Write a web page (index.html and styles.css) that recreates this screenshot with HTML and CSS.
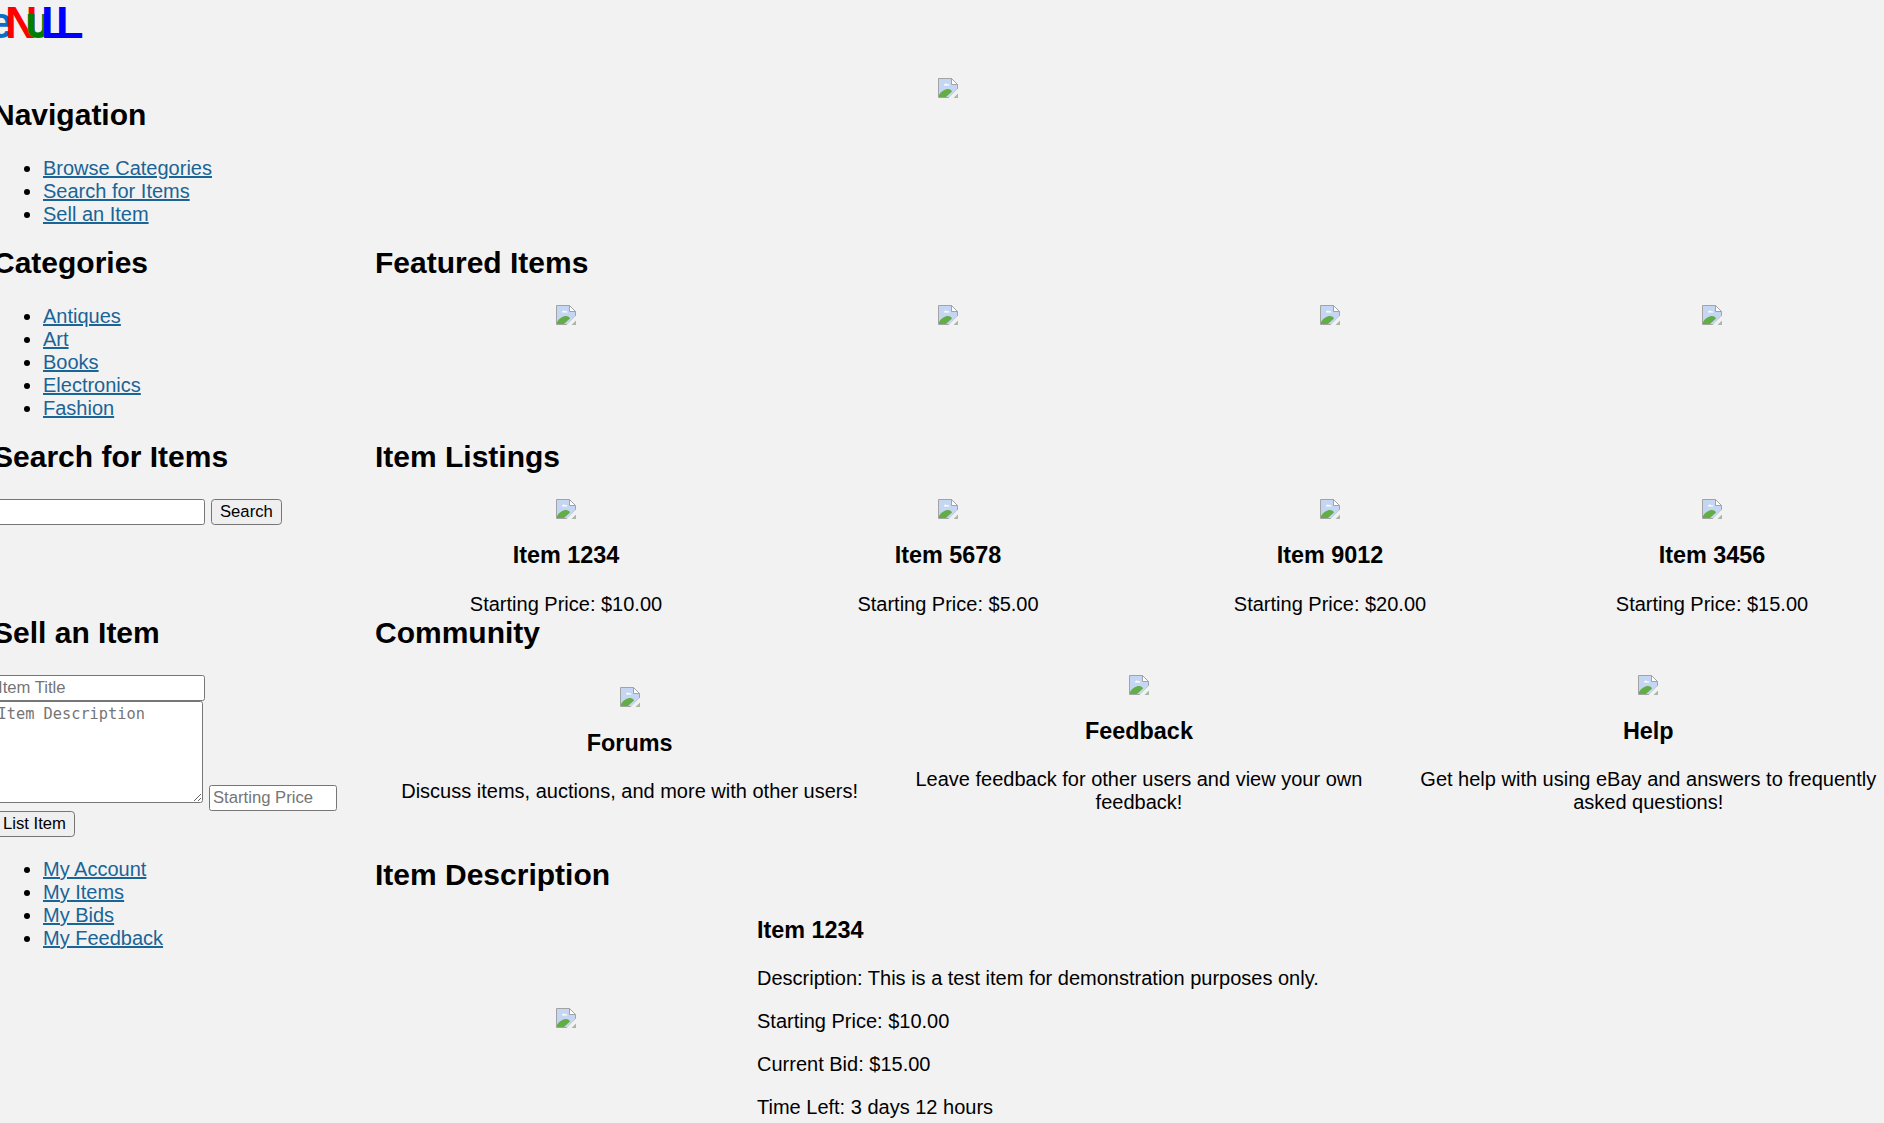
FILE: index.html
```html
<!DOCTYPE html>
<html lang="en">

<head>
    <meta charset="UTF-8">
    <title>eNULL</title>
    <link rel="stylesheet" href="styles.css">
</head>

<body>
    <!-- broken image glyph, reused everywhere -->
    <svg class="defs" width="0" height="0">
        <symbol id="broken" viewBox="0 0 20 20">
            <path d="M.5.5H13.5L19.5 6.5V11L11.500 19.500H.5Z" fill="#c5d6f2" stroke="#a3a3a3"/>
            <path d="M13.500.5V6.500H19.500Z" fill="#fff" stroke="#a3a3a3"/>
            <path d="M6 7.500a1.600 1.600 0 0 1 3-1 1.500 1.500 0 0 1 2.500 1Z" fill="#fff"/>
            <path d="M1 19V17C3 13.500 7 11 10 11C12 11 13.500 12 14 13.500L8 19Z" fill="#62ad45"/>
            <path d="M20 10.500 10.500 20H14L20 14Z" fill="#f2f2f2"/>
            <path d="M20 15.500V20H15.500Z" fill="#a9b8a2"/>
        </symbol>
    </svg>

    <div class="page">
        <div class="logo"><span class="e">e</span><span class="n">N</span><span class="u">U</span><span class="l">L</span><span class="l last">L</span></div>
        <div class="hero"><svg class="pic"><use href="#broken"/></svg></div>

        <div class="side">
            <h2>Navigation</h2>
            <ul>
                <li><a href="#">Browse Categories</a></li>
                <li><a href="#">Search for Items</a></li>
                <li><a href="#">Sell an Item</a></li>
            </ul>
        </div>
        <div></div>

        <div class="side">
            <h2>Categories</h2>
            <ul>
                <li><a href="#">Antiques</a></li>
                <li><a href="#">Art</a></li>
                <li><a href="#">Books</a></li>
                <li><a href="#">Electronics</a></li>
                <li><a href="#">Fashion</a></li>
            </ul>
        </div>
        <div class="main">
            <h2>Featured Items</h2>
            <div class="items">
                <div class="item"><svg class="pic"><use href="#broken"/></svg></div>
                <div class="item"><svg class="pic"><use href="#broken"/></svg></div>
                <div class="item"><svg class="pic"><use href="#broken"/></svg></div>
                <div class="item"><svg class="pic"><use href="#broken"/></svg></div>
            </div>
        </div>

        <div class="side">
            <h2>Search for Items</h2>
            <form class="search">
                <input class="field wide" type="text">
                <button class="btn" type="button">Search</button>
            </form>
        </div>
        <div class="main">
            <h2>Item Listings</h2>
            <div class="items">
                <div class="item">
                    <svg class="pic"><use href="#broken"/></svg>
                    <h3>Item 1234</h3>
                    <p>Starting Price: $10.00</p>
                </div>
                <div class="item">
                    <svg class="pic"><use href="#broken"/></svg>
                    <h3>Item 5678</h3>
                    <p>Starting Price: $5.00</p>
                </div>
                <div class="item">
                    <svg class="pic"><use href="#broken"/></svg>
                    <h3>Item 9012</h3>
                    <p>Starting Price: $20.00</p>
                </div>
                <div class="item">
                    <svg class="pic"><use href="#broken"/></svg>
                    <h3>Item 3456</h3>
                    <p>Starting Price: $15.00</p>
                </div>
            </div>
        </div>

        <div class="side">
            <h2>Sell an Item</h2>
            <form class="sell">
                <input class="field wide" type="text" placeholder="Item Title">
                <div class="sell-row">
                    <textarea class="desc" placeholder="Item Description"></textarea>
                    <input class="field price" type="text" placeholder="Starting Price">
                </div>
                <button class="btn" type="button">List Item</button>
            </form>
            <ul>
                <li><a href="#">My Account</a></li>
                <li><a href="#">My Items</a></li>
                <li><a href="#">My Bids</a></li>
                <li><a href="#">My Feedback</a></li>
            </ul>
        </div>
        <div class="main">
            <h2>Community</h2>
            <div class="community">
                <div class="card">
                    <svg class="pic"><use href="#broken"/></svg>
                    <h3>Forums</h3>
                    <p>Discuss items, auctions, and more with other users!</p>
                </div>
                <div class="card">
                    <svg class="pic"><use href="#broken"/></svg>
                    <h3>Feedback</h3>
                    <p>Leave feedback for other users and view your own feedback!</p>
                </div>
                <div class="card">
                    <svg class="pic"><use href="#broken"/></svg>
                    <h3>Help</h3>
                    <p>Get help with using eBay and answers to frequently asked questions!</p>
                </div>
            </div>

            <h2>Item Description</h2>
            <div class="detail">
                <div class="detail-pic"><svg class="pic"><use href="#broken"/></svg></div>
                <div class="detail-text">
                    <h3>Item 1234</h3>
                    <p>Description: This is a test item for demonstration purposes only.</p>
                    <p>Starting Price: $10.00</p>
                    <p>Current Bid: $15.00</p>
                    <p>Time Left: 3 days 12 hours</p>
                </div>
            </div>
        </div>
    </div>
</body>

</html>
```

FILE: styles.css
```css
* {
    box-sizing: border-box;
}

html {
    overflow: hidden;
}

body {
    margin: 0;
    background-color: #f2f2f2;
    color: #000;
    font-family: "Liberation Sans", Arial, sans-serif;
    font-size: 20px;
    line-height: 23px;
}

.defs {
    display: block;
    height: 0;
}

/* the row sticks out past the window on both sides */
.page {
    display: grid;
    grid-template-columns: 381px 1528px;
    grid-template-rows: 98px 148px 194px 176px auto;
    width: 1909px;
    margin-left: -6px;
}

/* letters of the logo overlap, each one is pulled onto the last */
.logo {
    grid-column: 1;
    grid-row: 1;
    font-size: 45px;
    font-weight: bold;
    line-height: 45px;
    white-space: nowrap;
}

.logo .e {
    margin: 0 -8px 0 -6px;
    color: #0a6ec8;
}

.logo .n {
    margin-right: -10.500px;
    color: #ff0000;
}

.logo .u {
    margin-right: -8.500px;
    color: #008000;
    font-size: 31px;
    vertical-align: 1px;
    -webkit-text-stroke: 2px #008000;
}

.logo .l {
    margin-right: -12.500px;
    color: #0000ff;
}

.logo .last {
    margin-right: 0;
}

.hero {
    grid-column: 1 / 3;
    grid-row: 1;
    align-self: end;
    text-align: center;
    line-height: 0;
    padding-right: 1px;
}

.pic {
    display: block;
    width: 20px;
    height: 20px;
    margin: 0 auto;
}

.hero .pic {
    display: inline-block;
}

h2 {
    margin: 0 0 25px;
    font-size: 30px;
    line-height: 34px;
}

.side h2 {
    margin-left: -1px;
}

h3 {
    margin: 0 0 23px;
    font-size: 23.4px;
    line-height: 27px;
}

p {
    margin: 0;
}

ul {
    margin: 0 0 20px;
    padding-left: 49px;
}

a {
    color: #1a6496;
}

.items {
    display: grid;
    grid-template-columns: repeat(4, 382px);
    text-align: center;
}

.item .pic {
    margin-bottom: 23px;
}

.item h3 {
    margin-bottom: 24px;
}

.search {
    display: flex;
    align-items: center;
    gap: 6px;
}

.field {
    height: 26px;
    padding: 1px 3px;
    border: 1.250px solid #767676;
    border-radius: 2.500px;
    background-color: #fff;
    font-family: "Liberation Sans", Arial, sans-serif;
    font-size: 16.670px;
}

.field::placeholder,
.desc::placeholder {
    color: #757575;
    opacity: 1;
}

.wide {
    display: block;
    width: 211px;
}

.btn {
    height: 26px;
    padding: 1px 8px;
    border: 1.250px solid #767676;
    border-radius: 3.750px;
    background-color: #efefef;
    color: #000;
    font-family: "Liberation Sans", Arial, sans-serif;
    font-size: 16.670px;
}

.sell {
    margin-bottom: 21px;
}

.sell-row {
    display: flex;
    align-items: flex-end;
    gap: 6px;
    height: 110px;
}

.desc {
    display: block;
    width: 209px;
    height: 102px;
    margin-bottom: 8px;
    padding: 2.500px;
    border: 1.250px solid #767676;
    border-radius: 2.500px;
    background-color: #fff;
    font-family: "DejaVu Sans Mono", monospace;
    font-size: 15.300px;
}

.price {
    width: 128px;
}

.community {
    display: grid;
    grid-template-columns: repeat(3, 509.300px);
    align-items: center;
    margin-bottom: 44px;
    text-align: center;
}

.card {
    padding: 0 19px;
}

.card .pic {
    margin-bottom: 23px;
}

.detail {
    display: grid;
    grid-template-columns: 382px 1fr;
    align-items: center;
}

.detail-text p {
    margin-bottom: 20px;
}

.detail-text p:last-child {
    margin-bottom: 0;
}
```
